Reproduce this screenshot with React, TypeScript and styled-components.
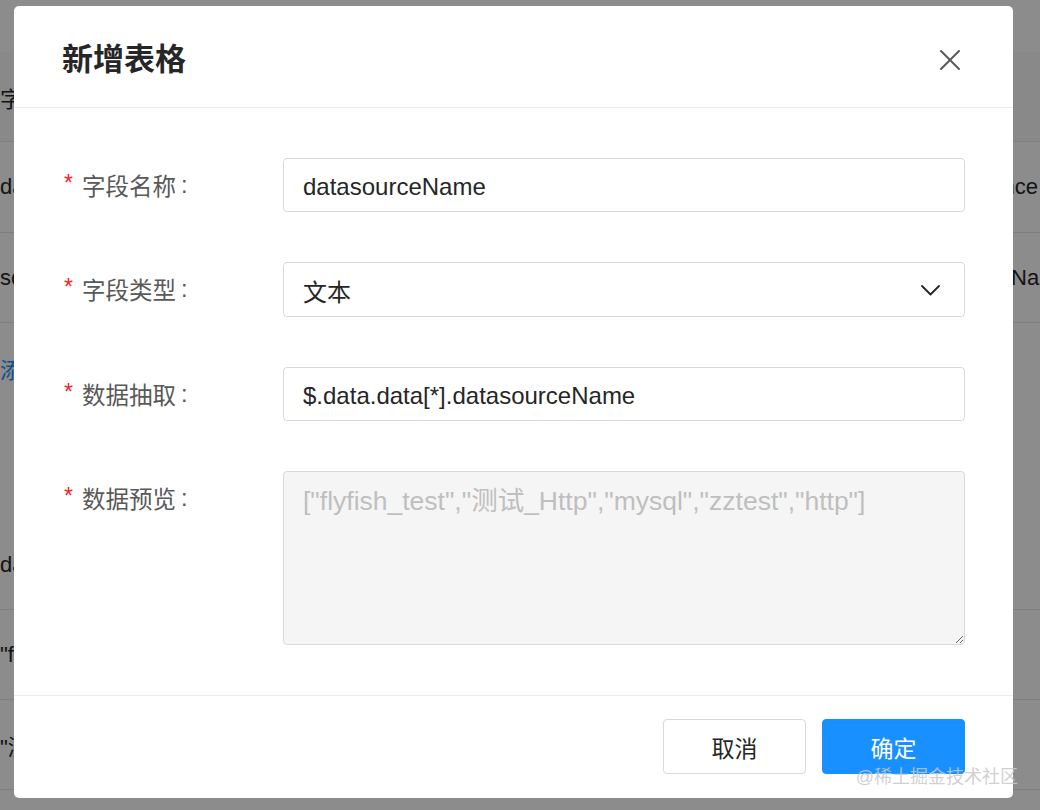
import { createGlobalStyle, styled } from "styled-components"

const GlobalStyle = createGlobalStyle`
  html, body {
    margin: 0;
    padding: 0;
  }
  body {
    font-family: "Liberation Sans", "Noto Sans CJK SC", sans-serif;
    background: #fff;
  }
  * {
    box-sizing: border-box;
  }
`

const FONT = `"Liberation Sans", "Noto Sans CJK SC", sans-serif`

const Screen = styled.div`
  position: relative;
  width: 1040px;
  height: 810px;
  overflow: hidden;
  background: #fff;
`

/* page behind the dialog */
const Page = styled.div`
  display: flex;
  flex-direction: column;
  padding-top: 52px;
`

const TableRow = styled.div<{ $h: number; $head?: boolean; $line?: boolean }>`
  height: ${(p) => p.$h}px;
  display: flex;
  align-items: center;
  justify-content: space-between;
  background: ${(p) => (p.$head ? "#fafafa" : "#fff")};
  border-bottom: 1px solid ${(p) => (p.$line === false ? "transparent" : "#e8e8e8")};
  font-size: 22px;
  color: #262626;
`

const LeftCell = styled.span<{ $link?: boolean }>`
  white-space: nowrap;
  color: ${(p) => (p.$link ? "#1890ff" : "#262626")};
`

const RightCell = styled.span`
  width: 95px;
  white-space: nowrap;
  overflow: hidden;
`

const Mask = styled.div`
  position: absolute;
  inset: 0;
  background: rgba(0, 0, 0, 0.45);
`

/* dialog */
const Modal = styled.div`
  position: absolute;
  left: 14px;
  top: 6px;
  width: 999px;
  background: #fff;
  border-radius: 5px;
  display: flex;
  flex-direction: column;
  font-family: ${FONT};
`

const Header = styled.div`
  height: 102px;
  padding: 0 48px;
  display: flex;
  align-items: center;
  justify-content: space-between;
  border-bottom: 1px solid #ebebeb;
`

const Title = styled.h2`
  margin: 0;
  font-size: 31px;
  font-weight: 700;
  color: #262626;
`

const CloseButton = styled.button`
  width: 26px;
  height: 26px;
  margin-right: 2px;
  margin-top: 6px;
  padding: 0;
  border: 0;
  background: transparent;
  display: flex;
  align-items: center;
  justify-content: center;
  cursor: pointer;
`

const Body = styled.div`
  padding: 50px 48px 50px 48px;
  display: flex;
  flex-direction: column;
  gap: 50px;
  border-bottom: 1px solid #ebebeb;
`

const FormItem = styled.div`
  display: grid;
  grid-template-columns: 221px 1fr;
  align-items: start;
`

const Label = styled.label`
  height: 54px;
  display: flex;
  align-items: center;
  font-size: 23.5px;
  color: #595959;
  white-space: nowrap;
`

const Required = styled.span`
  color: #f5222d;
  font-family: "Liberation Sans", sans-serif;
  font-size: 23px;
  margin-left: 2px;
  margin-right: 9px;
  position: relative;
  top: -2px;
`

const Colon = styled.span`
  margin-left: 5px;
`

const Input = styled.input`
  width: 100%;
  height: 54px;
  padding: 3px 19px 0 19px;
  border: 1px solid #d9d9d9;
  border-radius: 4px;
  font-family: ${FONT};
  font-size: 24px;
  color: #262626;
  background: #fff;
  outline: none;
`

const Select = styled.div`
  height: 55px;
  padding: 2px 24px 0 19px;
  border: 1px solid #d9d9d9;
  border-radius: 4px;
  display: flex;
  align-items: center;
  justify-content: space-between;
  font-size: 24px;
  color: #262626;
`

const TextArea = styled.textarea`
  width: 100%;
  height: 174px;
  padding: 11px 19px;
  border: 1px solid #d9d9d9;
  border-radius: 4px;
  background: #f5f5f5;
  color: #bfbfbf;
  font-family: ${FONT};
  font-size: 26.5px;
  line-height: 36px;
  resize: vertical;
  outline: none;
  display: block;
`

const Footer = styled.div`
  padding: 23px 48px 24px 48px;
  display: flex;
  justify-content: flex-end;
  gap: 16px;
`

const Button = styled.button<{ $primary?: boolean }>`
  width: 143px;
  height: 55px;
  border-radius: 4px;
  border: 1px solid ${(p) => (p.$primary ? "#1890ff" : "#d9d9d9")};
  background: ${(p) => (p.$primary ? "#1890ff" : "#fff")};
  color: ${(p) => (p.$primary ? "#fff" : "#262626")};
  font-family: ${FONT};
  font-size: 23px;
  cursor: pointer;
`

const Watermark = styled.div`
  position: absolute;
  right: 22px;
  bottom: 22px;
  font-family: ${FONT};
  font-size: 18px;
  color: rgba(200, 200, 200, 0.85);
  white-space: nowrap;
`

const CloseIcon = () => (
  <svg width="22" height="22" viewBox="0 0 22 22" fill="none">
    <path d="M2 2 L20 20 M20 2 L2 20" stroke="#595959" strokeWidth="2" strokeLinecap="round" />
  </svg>
)

const ChevronDown = () => (
  <svg width="19" height="11" viewBox="0 0 19 11" fill="none">
    <path d="M1 1 L9.5 9.5 L18 1" stroke="#262626" strokeWidth="1.8" strokeLinecap="round" strokeLinejoin="round" />
  </svg>
)

const BackgroundPage = () => (
  <Page>
    <TableRow $h={90} $head>
      <LeftCell>字段名称</LeftCell>
      <RightCell />
    </TableRow>
    <TableRow $h={91}>
      <LeftCell>datasourceName</LeftCell>
      <RightCell>reference</RightCell>
    </TableRow>
    <TableRow $h={90}>
      <LeftCell>scope</LeftCell>
      <RightCell>sourceName</RightCell>
    </TableRow>
    <TableRow $h={90} $line={false}>
      <LeftCell $link>添加</LeftCell>
      <RightCell />
    </TableRow>
    <TableRow $h={107} $line={false}>
      <LeftCell />
      <RightCell />
    </TableRow>
    <TableRow $h={90}>
      <LeftCell>data</LeftCell>
      <RightCell />
    </TableRow>
    <TableRow $h={90}>
      <LeftCell>"flyfish_test"</LeftCell>
      <RightCell />
    </TableRow>
    <TableRow $h={90}>
      <LeftCell>"测试_Http"</LeftCell>
      <RightCell />
    </TableRow>
  </Page>
)

export default function App() {
  return (
    <Screen>
      <GlobalStyle />
      <BackgroundPage />
      <Mask />
      <Modal>
        <Header>
          <Title>新增表格</Title>
          <CloseButton aria-label="关闭">
            <CloseIcon />
          </CloseButton>
        </Header>
        <Body>
          <FormItem>
            <Label>
              <Required>*</Required>字段名称<Colon>:</Colon>
            </Label>
            <Input defaultValue="datasourceName" />
          </FormItem>
          <FormItem>
            <Label>
              <Required>*</Required>字段类型<Colon>:</Colon>
            </Label>
            <Select>
              <span>文本</span>
              <ChevronDown />
            </Select>
          </FormItem>
          <FormItem>
            <Label>
              <Required>*</Required>数据抽取<Colon>:</Colon>
            </Label>
            <Input defaultValue="$.data.data[*].datasourceName" />
          </FormItem>
          <FormItem>
            <Label>
              <Required>*</Required>数据预览<Colon>:</Colon>
            </Label>
            <TextArea
              readOnly
              value={'["flyfish_test","测试_Http","mysql","zztest","http"]'}
            />
          </FormItem>
        </Body>
        <Footer>
          <Button>取消</Button>
          <Button $primary>确定</Button>
        </Footer>
      </Modal>
      <Watermark>@稀土掘金技术社区</Watermark>
    </Screen>
  )
}
